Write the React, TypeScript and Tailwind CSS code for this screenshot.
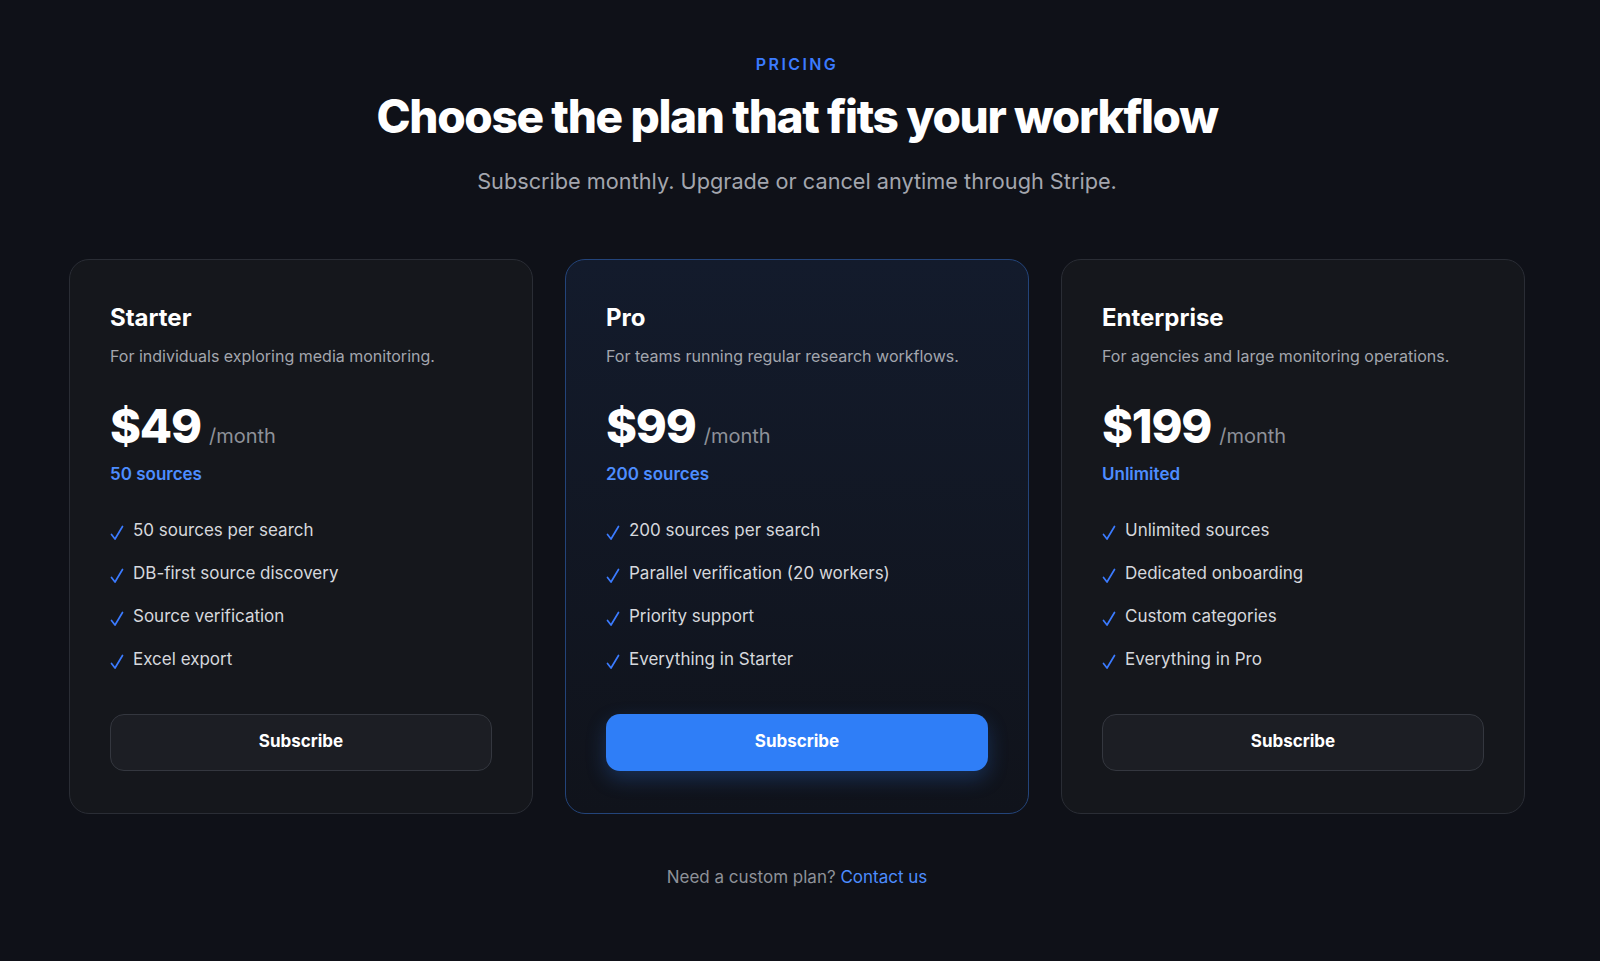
const plans = [
  {
    name: "Starter",
    desc: "For individuals exploring media monitoring.",
    price: "$49",
    quota: "50 sources",
    features: ["50 sources per search", "DB-first source discovery", "Source verification", "Excel export"],
  },
  {
    name: "Pro",
    desc: "For teams running regular research workflows.",
    price: "$99",
    quota: "200 sources",
    features: ["200 sources per search", "Parallel verification (20 workers)", "Priority support", "Everything in Starter"],
    featured: true,
  },
  {
    name: "Enterprise",
    desc: "For agencies and large monitoring operations.",
    price: "$199",
    quota: "Unlimited",
    features: ["Unlimited sources", "Dedicated onboarding", "Custom categories", "Everything in Pro"],
  },
];

function Check() {
  return (
    <svg width="14" height="16" viewBox="0 0 14 16" fill="none" className="mt-1.5 shrink-0">
      <path d="M1.5 9.5 L5 14 L12.5 1.5" stroke="#3b7bff" strokeWidth="1.7" strokeLinecap="round" strokeLinejoin="round" />
    </svg>
  );
}

function PlanCard({ plan }: { plan: (typeof plans)[number] }) {
  return (
    <div
      className={`flex flex-col rounded-[20px] border px-10 pt-[42px] pb-[42px] ${
        plan.featured
          ? "border-[#23447a] bg-gradient-to-b from-[#131b2c] to-[#10131b]"
          : "border-[#2a2d35] bg-[#15171c]"
      }`}
    >
      <h3 className="text-[24px] font-bold leading-8 text-white">{plan.name}</h3>
      <p className="mt-[10px] text-[16px] leading-6 text-[#a3a6ae]">{plan.desc}</p>
      <div className="mt-[30px] flex items-baseline gap-2">
        <span className="text-[47px] font-extrabold leading-[56px] tracking-tight text-white">{plan.price}</span>
        <span className="text-[20px] text-[#8e9199]">/month</span>
      </div>
      <div className="mt-2 text-[17px] font-semibold text-[#4d8dff]">{plan.quota}</div>
      <ul className="mt-[28px] flex flex-col gap-[15px]">
        {plan.features.map((f) => (
          <li key={f} className="flex items-center gap-[9px] text-[17px] leading-[28px] text-[#d6d8dd]">
            <Check />
            <span>{f}</span>
          </li>
        ))}
      </ul>
      <button
        className={`mt-[41px] h-[57px] w-full rounded-[14px] text-[17px] font-bold text-white ${
          plan.featured
            ? "bg-[#2f7ef7] shadow-[0_8px_20px_rgba(47,126,247,0.25)]"
            : "border border-[#34373f] bg-[#1c1e24]"
        }`}
      >
        Subscribe
      </button>
    </div>
  );
}

export default function App() {
  return (
    <div
      className="min-h-screen w-full bg-[#0f1118] pr-1.5"
      style={{ fontFamily: "Inter, 'Liberation Sans', sans-serif" }}
    >
      <div className="flex flex-col items-center pt-[52px]">
        <div className="text-[16px] font-semibold tracking-[0.15em] text-[#3b7bff]">PRICING</div>
        <h1 className="mt-[12px] text-[46px] font-extrabold leading-[56px] tracking-[-0.03em] text-white">
          Choose the plan that fits your workflow
        </h1>
        <p className="mt-[23px] text-[21.7px] leading-7 text-[#a3a6ae]">
          Subscribe monthly. Upgrade or cancel anytime through Stripe.
        </p>
      </div>
      <div className="mx-auto mt-[64px] grid w-[1456px] grid-cols-3 gap-8">
        {plans.map((p) => (
          <PlanCard key={p.name} plan={p} />
        ))}
      </div>
      <div className="mt-[51px] pb-16 text-center text-[17px] text-[#8e9199]">
        Need a custom plan? <span className="text-[#4d8dff]">Contact us</span>
      </div>
    </div>
  );
}
